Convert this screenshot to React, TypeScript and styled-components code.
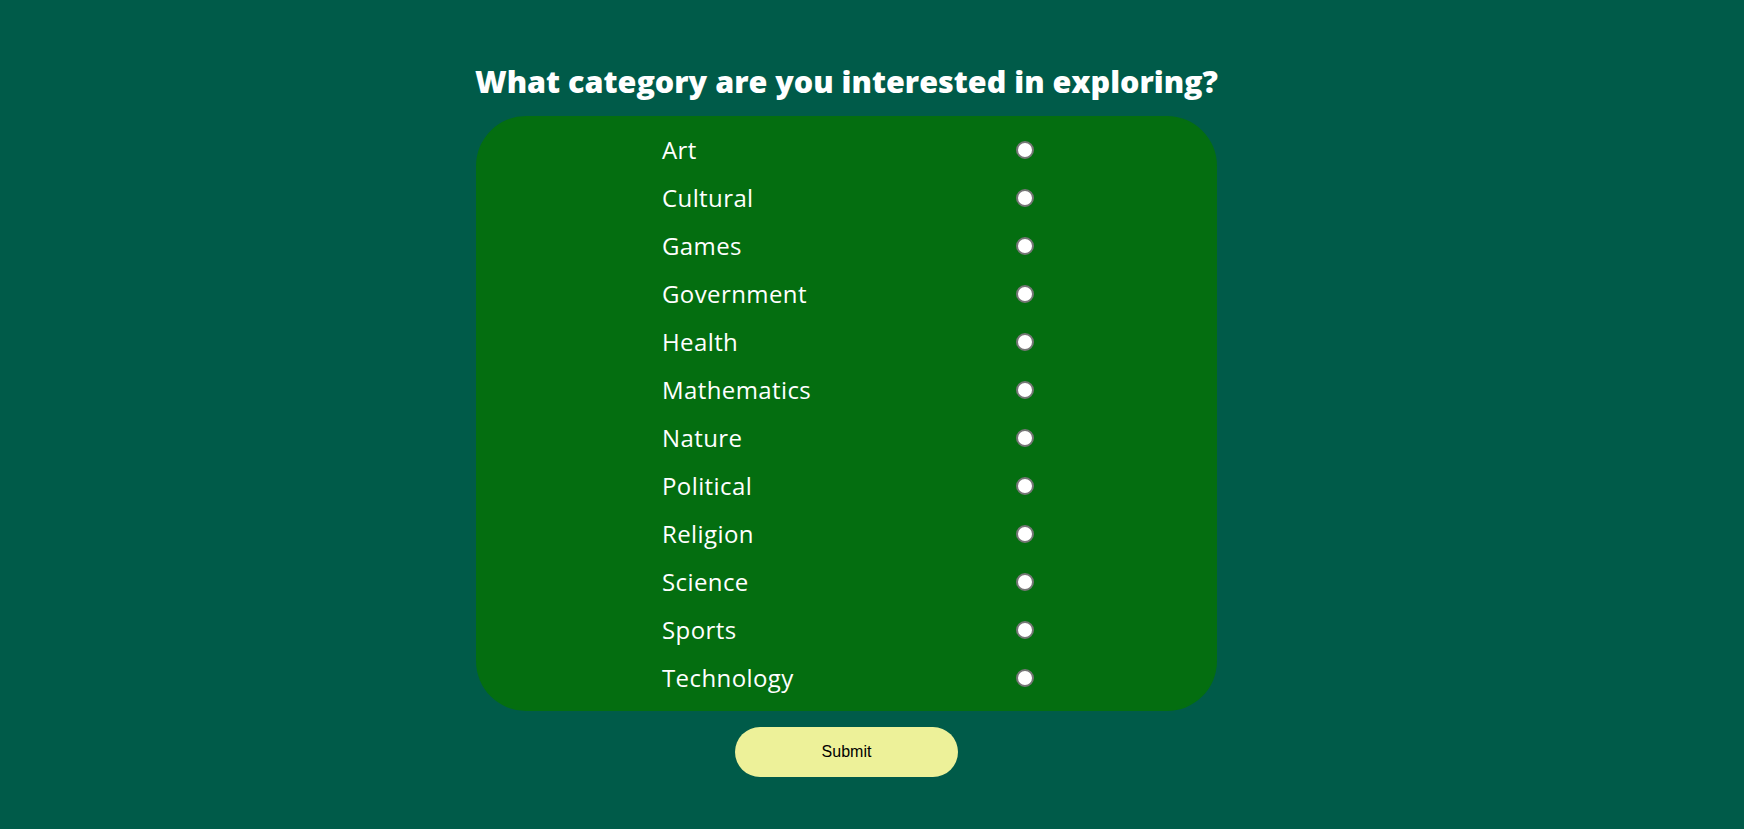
import React, { useState } from 'react';
import styled, { createGlobalStyle } from 'styled-components';

const GlobalStyle = createGlobalStyle`
  html, body {
    margin: 0;
    padding: 0;
    background: #005b49;
    min-height: 100%;
  }
`;

const Page = styled.div`
  min-height: 829px;
  box-sizing: border-box;
  padding: 60px 51px 0 0;
  display: flex;
  flex-direction: column;
  align-items: center;
`;

const Title = styled.h1`
  margin: 0 0 14px;
  font-family: 'Open Sans', sans-serif;
  font-weight: 800;
  font-size: 30.5px;
  line-height: 42px;
  color: #fff;
  white-space: nowrap;
`;

const Panel = styled.form`
  width: 741px;
  height: 595px;
  box-sizing: border-box;
  padding: 10px 0 9px 3px;
  background: #046e10;
  border-radius: 50px;
  display: flex;
  flex-direction: column;
  align-items: center;
`;

const Row = styled.label`
  width: 372px;
  height: 48px;
  display: flex;
  align-items: center;
  justify-content: space-between;
  font-family: 'Open Sans', sans-serif;
  font-size: 24px;
  letter-spacing: 0.4px;
  line-height: 48px;
  color: #fff;
  cursor: pointer;
`;

const Radio = styled.input`
  appearance: none;
  width: 18px;
  height: 18px;
  margin: 0;
  box-sizing: border-box;
  border: 2px solid #767676;
  border-radius: 50%;
  background: #fff;
  cursor: pointer;

  &:checked {
    background: radial-gradient(circle, #0075ff 0 4px, #fff 4.5px);
    border-color: #0075ff;
  }
`;

const SubmitButton = styled.button`
  margin-top: 16px;
  width: 223px;
  height: 50px;
  border: none;
  border-radius: 25px;
  background: #edf199;
  color: #000;
  font-family: 'Liberation Sans', Arial, sans-serif;
  font-size: 16px;
  cursor: pointer;
`;

const categories = [
  'Art',
  'Cultural',
  'Games',
  'Government',
  'Health',
  'Mathematics',
  'Nature',
  'Political',
  'Religion',
  'Science',
  'Sports',
  'Technology',
];

export default function App() {
  const [picked, setPicked] = useState<string | null>(null);

  return (
    <>
      <GlobalStyle />
      <Page>
        <Title>What category are you interested in exploring?</Title>
        <Panel onSubmit={e => e.preventDefault()}>
          {categories.map(cat => (
            <Row key={cat}>
              <span>{cat}</span>
              <Radio
                type="radio"
                name="category"
                value={cat}
                checked={picked === cat}
                onChange={() => setPicked(cat)}
              />
            </Row>
          ))}
        </Panel>
        <SubmitButton type="button">Submit</SubmitButton>
      </Page>
    </>
  );
}
